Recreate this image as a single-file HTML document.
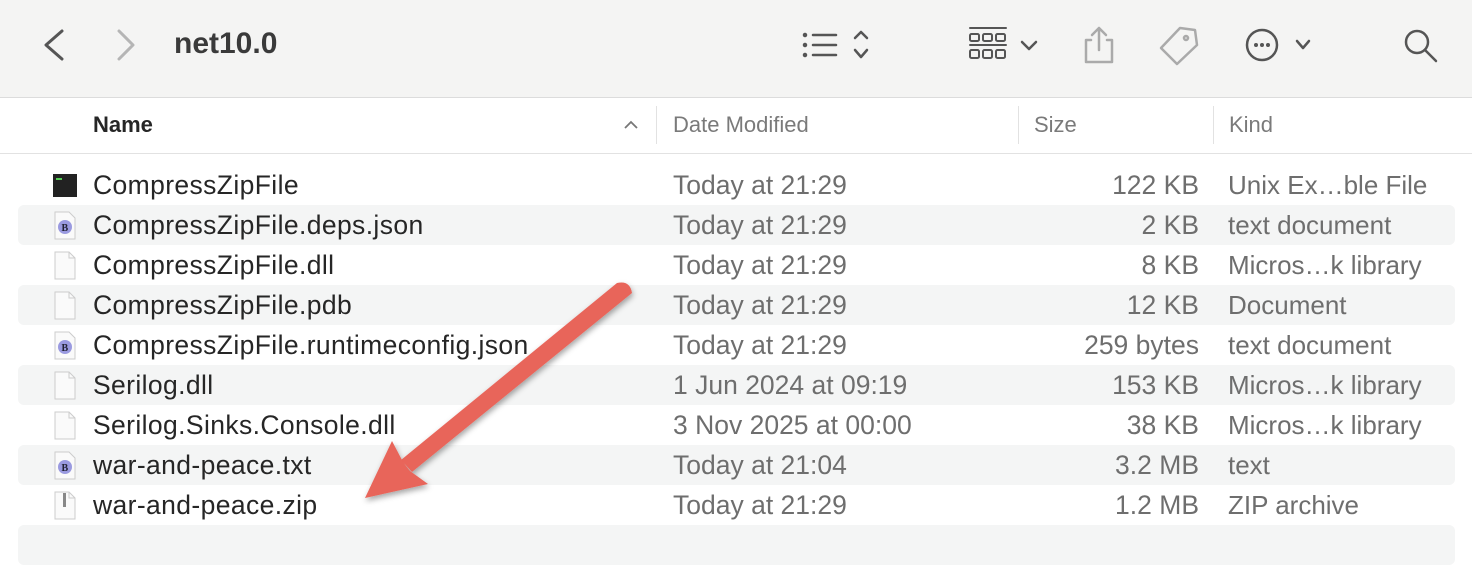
<!DOCTYPE html>
<html><head><style>
*{margin:0;padding:0;box-sizing:border-box}
body{width:1472px;height:556px;overflow:hidden;background:#fff;font-family:"Liberation Sans",Arial,sans-serif;position:relative}
.tb{position:absolute;left:0;top:0;width:1472px;height:98px;background:#f4f4f3;border-bottom:1px solid #dcdcdc}
.title{position:absolute;left:174px;top:27px;font-size:30px;font-weight:bold;color:#3a3a3a}
.hdr{position:absolute;top:99px;left:0;width:1472px;height:55px;border-bottom:1px solid #e2e2e2;font-size:22px;color:#7a7a7a}
.hdr span{position:absolute;top:13px}
.sep{position:absolute;top:7px;width:1px;height:38px;background:#e2e2e2}
.row{position:absolute;left:18px;width:1437px;height:40px;font-size:26.5px;color:#262626}
.row.s{background:#f4f5f5;border-radius:6px}
.row span{position:absolute;top:5px;white-space:nowrap}
.n{left:75px;letter-spacing:0.38px}.d{left:655px;color:#6e6e6e}.z{right:256px;color:#6e6e6e}.k{left:1210px;color:#6e6e6e;font-size:26px}
.ic{position:absolute;left:35px;top:6px;width:24px;height:29px}
</style></head><body>
<div class="tb">
<svg width="1472" height="98" style="position:absolute;left:0;top:0" fill="none" stroke-linecap="round" stroke-linejoin="round">
<path d="M62 31 L46 45 L62 59" stroke="#555" stroke-width="3"/>
<path d="M119 31 L133 45 L119 59" stroke="#b5b5b5" stroke-width="3"/>
<g stroke="#555" stroke-width="2.5"><circle cx="805" cy="35" r="1" fill="#555"/><circle cx="805" cy="45" r="1" fill="#555"/><circle cx="805" cy="55" r="1" fill="#555"/>
<path d="M813 35H836M813 45H836M813 55H836"/><path d="M855 38L861 32L867 38M855 50L861 57L867 50"/></g>
<g stroke="#555" stroke-width="2"><path d="M970 28H1006M970 45H1006"/><rect x="970" y="34" width="9" height="7" rx="1.5"/><rect x="983" y="34" width="9" height="7" rx="1.5"/><rect x="996" y="34" width="9" height="7" rx="1.5"/><rect x="970" y="50" width="9" height="8" rx="1.5"/><rect x="983" y="50" width="9" height="8" rx="1.5"/><rect x="996" y="50" width="9" height="8" rx="1.5"/>
<path d="M1022 42L1029 49L1036 42" stroke-width="2.5"/></g>
<g stroke="#aaa" stroke-width="2.5"><path d="M1091 40H1086V62H1112V40H1107M1099 28V50M1092 35L1099 28L1106 35"/>
<path d="M1180 28L1195 30L1197 45L1177 64L1161 48Z"/><circle cx="1186" cy="38" r="2"/></g>
<g stroke="#555" stroke-width="2.5"><circle cx="1262" cy="45" r="15"/><path d="M1297 41L1303 48L1309 41"/>
<circle cx="1417" cy="42" r="11"/><path d="M1425 50L1436 61"/></g>
<g fill="#555"><circle cx="1256" cy="45" r="2"/><circle cx="1262" cy="45" r="2"/><circle cx="1268" cy="45" r="2"/></g>
</svg>
<div class="title">net10.0</div>
</div>
<div class="hdr">
<span style="left:93px;color:#262626;font-weight:bold">Name</span>
<svg style="position:absolute;left:623px;top:20px" width="16" height="12"><path d="M2 9L8 3L14 9" stroke="#777" stroke-width="1.8" fill="none"/></svg>
<div class="sep" style="left:656px"></div><span style="left:673px">Date Modified</span>
<div class="sep" style="left:1018px"></div><span style="left:1034px">Size</span>
<div class="sep" style="left:1213px"></div><span style="left:1229px">Kind</span>
</div>

<div class="row" style="top:165px"><svg class="ic" viewBox="0 0 24 29"><rect x="-2" y="3" width="28" height="23" rx="2" fill="#222"/><rect x="3" y="7" width="6" height="2" fill="#5c5"/></svg><span class="n">CompressZipFile</span><span class="d">Today at 21:29</span><span class="z">122 KB</span><span class="k">Unix Ex…ble File</span></div>
<div class="row s" style="top:205px"><svg class="ic" viewBox="0 0 24 29"><path d="M2 1H16L22 7V28H2Z" fill="#fafafa" stroke="#ccc"/><circle cx="12" cy="16" r="7" fill="#9a9ae0"/><text x="8.5" y="20" font-size="10" font-family="Liberation Serif" fill="#223" font-weight="bold">B</text></svg><span class="n">CompressZipFile.deps.json</span><span class="d">Today at 21:29</span><span class="z">2 KB</span><span class="k">text document</span></div>
<div class="row" style="top:245px"><svg class="ic" viewBox="0 0 24 29"><path d="M2 1H16L22 7V28H2Z" fill="#fafafa" stroke="#ccc"/><path d="M16 1V7H22" fill="none" stroke="#ccc"/></svg><span class="n">CompressZipFile.dll</span><span class="d">Today at 21:29</span><span class="z">8 KB</span><span class="k">Micros…k library</span></div>
<div class="row s" style="top:285px"><svg class="ic" viewBox="0 0 24 29"><path d="M2 1H16L22 7V28H2Z" fill="#fafafa" stroke="#ccc"/><path d="M16 1V7H22" fill="none" stroke="#ccc"/></svg><span class="n">CompressZipFile.pdb</span><span class="d">Today at 21:29</span><span class="z">12 KB</span><span class="k">Document</span></div>
<div class="row" style="top:325px"><svg class="ic" viewBox="0 0 24 29"><path d="M2 1H16L22 7V28H2Z" fill="#fafafa" stroke="#ccc"/><circle cx="12" cy="16" r="7" fill="#9a9ae0"/><text x="8.5" y="20" font-size="10" font-family="Liberation Serif" fill="#223" font-weight="bold">B</text></svg><span class="n">CompressZipFile.runtimeconfig.json</span><span class="d">Today at 21:29</span><span class="z">259 bytes</span><span class="k">text document</span></div>
<div class="row s" style="top:365px"><svg class="ic" viewBox="0 0 24 29"><path d="M2 1H16L22 7V28H2Z" fill="#fafafa" stroke="#ccc"/><path d="M16 1V7H22" fill="none" stroke="#ccc"/></svg><span class="n">Serilog.dll</span><span class="d">1 Jun 2024 at 09:19</span><span class="z">153 KB</span><span class="k">Micros…k library</span></div>
<div class="row" style="top:405px"><svg class="ic" viewBox="0 0 24 29"><path d="M2 1H16L22 7V28H2Z" fill="#fafafa" stroke="#ccc"/><path d="M16 1V7H22" fill="none" stroke="#ccc"/></svg><span class="n">Serilog.Sinks.Console.dll</span><span class="d">3 Nov 2025 at 00:00</span><span class="z">38 KB</span><span class="k">Micros…k library</span></div>
<div class="row s" style="top:445px"><svg class="ic" viewBox="0 0 24 29"><path d="M2 1H16L22 7V28H2Z" fill="#fafafa" stroke="#ccc"/><circle cx="12" cy="16" r="7" fill="#9a9ae0"/><text x="8.5" y="20" font-size="10" font-family="Liberation Serif" fill="#223" font-weight="bold">B</text></svg><span class="n">war-and-peace.txt</span><span class="d">Today at 21:04</span><span class="z">3.2 MB</span><span class="k">text</span></div>
<div class="row" style="top:485px"><svg class="ic" viewBox="0 0 24 29"><path d="M2 1H16L22 7V28H2Z" fill="#fafafa" stroke="#ccc"/><path d="M16 1V7H22" fill="none" stroke="#ccc"/><rect x="10" y="2" width="3" height="14" fill="#888"/></svg><span class="n">war-and-peace.zip</span><span class="d">Today at 21:29</span><span class="z">1.2 MB</span><span class="k">ZIP archive</span></div>
<div class="row s" style="top:525px;height:40px"></div>

<svg width="1472" height="556" style="position:absolute;left:0;top:0">
<defs><filter id="sh"><feDropShadow dx="1" dy="3" stdDeviation="3" flood-opacity="0.35"/></filter></defs>
<g filter="url(#sh)" fill="#e8655a">
<path d="M617 283 Q630 280 632 293 L412 472 L401 460 Z"/>
<path d="M392 441 L365 498 L428 484 L410 471 Q405 465 402 460 Z"/>
</g>
</svg>
</body></html>
